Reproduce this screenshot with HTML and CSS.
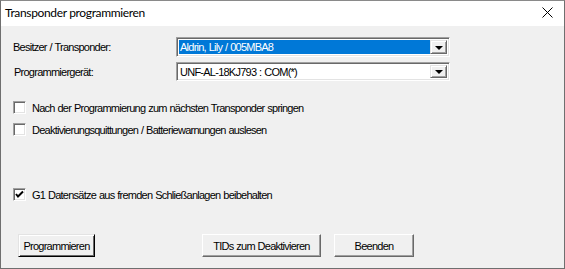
FILE: index.html
```html
<!DOCTYPE html>
<html>
<head lang="de">
    <meta charset="UTF-8">
    <title>Transponder programmieren</title>
    <link rel="stylesheet" href="styles.css">
</head>
<body>
<div class="window">
    <div class="titlebar">
        <span class="title">Transponder programmieren</span>
        <span class="close">
            <svg width="11" height="11" viewBox="0 0 11 11"><path d="M0.5 0.5 L10.5 10.5 M10.5 0.5 L0.5 10.5" stroke="#000" stroke-width="1"/></svg>
        </span>
    </div>
    <div class="content">
        <div class="row first">
            <span class="label">Besitzer / Transponder:</span>
            <div class="combo">
                <span class="value selected">Aldrin, Lily / 005MBA8</span>
                <span class="arrow"><i></i></span>
            </div>
        </div>
        <div class="row second">
            <span class="label">Programmiergerät:</span>
            <div class="combo">
                <span class="value">UNF-AL-18KJ793 : COM(*)</span>
                <span class="arrow"><i></i></span>
            </div>
        </div>

        <label class="check c1"><span class="box"></span>Nach der Programmierung zum nächsten Transponder springen</label>
        <label class="check c2"><span class="box"></span>Deaktivierungsquittungen / Batteriewarnungen auslesen</label>
        <label class="check c3"><span class="box checked">
            <svg width="9" height="9" viewBox="0 0 9 9"><path d="M1 4 L3 6.5 L8 1.5" stroke="#000" stroke-width="2" fill="none"/></svg>
        </span>G1 Datensätze aus fremden Schließanlagen beibehalten</label>

        <div class="buttons">
            <button class="btn default">Programmieren</button>
            <button class="btn tids">TIDs zum Deaktivieren</button>
            <button class="btn quit">Beenden</button>
        </div>
    </div>
</div>
</body>
</html>
```

FILE: styles.css
```css
body {
    margin: 0;
    padding: 0;
}

.window {
    width: 565px;
    height: 269px;
    box-sizing: border-box;
    border: 1px solid #6f6f6f;
    border-top-color: #8a8a8a;
    background: #f0f0f0;
    font-family: "Liberation Sans", Arial, sans-serif;
    font-size: 11px;
    letter-spacing: -0.75px;
    word-spacing: 0.5px;
    color: #000;
    display: flex;
    flex-direction: column;
}

.titlebar {
    height: 25px;
    background: #fff;
    display: flex;
    align-items: center;
    padding-left: 4px;
    font-family: Lato, "Noto Sans", sans-serif;
    font-size: 12px;
    letter-spacing: -0.35px;
    word-spacing: 0;
}

.title {
    flex: 1;
    margin-top: -2px;
}

.close {
    width: 11px;
    height: 11px;
    margin-right: 11px;
    margin-top: -3px;
    display: flex;
}

.content {
    flex: 1;
    padding: 11px 0 0 12px;
}

.row {
    display: flex;
    align-items: center;
}

.row.second {
    margin-top: 5px;
}

.label {
    width: 163px;
}

.row.second .label {
    padding-left: 1px;
    width: 162px;
}

.combo {
    width: 274px;
    height: 20px;
    box-sizing: border-box;
    border: 1px solid;
    border-color: #a0a0a0 #fff #fff #a0a0a0;
    box-shadow: inset 1px 1px 0 #696969, inset -1px -1px 0 #e3e3e3;
    background: #fff;
    display: flex;
    padding: 2px;
}

.row.second .combo {
    height: 19px;
}

.value {
    flex: 1;
    line-height: 14px;
    padding-left: 1px;
}

.value.selected {
    background: #0078d7;
    color: #fff;
}

.arrow {
    width: 17px;
    box-sizing: border-box;
    background: #f0f0f0;
    border: 1px solid;
    border-color: #e3e3e3 #696969 #696969 #e3e3e3;
    box-shadow: inset 1px 1px 0 #fff, inset -1px -1px 0 #a0a0a0;
    display: flex;
    align-items: center;
    justify-content: center;
}

.arrow i {
    width: 0;
    height: 0;
    border-left: 4px solid transparent;
    border-right: 4px solid transparent;
    border-top: 4px solid #000;
    margin-top: 1px;
}

.check {
    display: flex;
    align-items: center;
    height: 13px;
}

.check.c1 {
    margin-top: 20px;
}

.check.c2 {
    margin-top: 9px;
}

.check.c3 {
    margin-top: 52px;
}

.box {
    width: 13px;
    height: 13px;
    box-sizing: border-box;
    border: 1px solid;
    border-color: #a0a0a0 #fff #fff #a0a0a0;
    box-shadow: inset 1px 1px 0 #696969, inset -1px -1px 0 #e3e3e3;
    background: #fff;
    margin-right: 6px;
    display: flex;
    align-items: center;
    justify-content: center;
}

.buttons {
    display: flex;
    margin-top: 33px;
    padding-left: 5px;
}

.btn {
    height: 23px;
    box-sizing: border-box;
    background: #f0f0f0;
    font-family: inherit;
    font-size: 11px;
    letter-spacing: -0.75px;
    word-spacing: 0.5px;
    white-space: nowrap;
    color: #000;
    border: 1px solid;
    border-color: #fff #696969 #696969 #fff;
    box-shadow: inset -1px -1px 0 #a0a0a0;
    padding: 0;
}

.btn.default {
    width: 77px;
    border: 1px solid #000;
    border-color: #e3e3e3 #000 #000 #e3e3e3;
    box-shadow: inset 1px 1px 0 #fff, inset -1px -1px 0 #696969;
}

.btn.tids {
    width: 119px;
    margin-left: 107px;
}

.btn.quit {
    width: 80px;
    margin-left: 13px;
}
```
